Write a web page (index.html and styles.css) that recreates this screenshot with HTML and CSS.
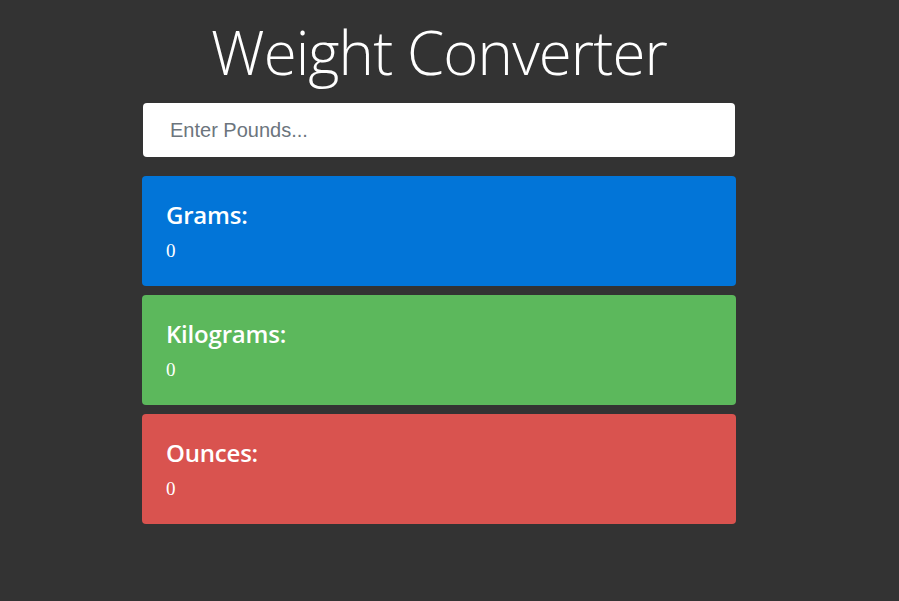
FILE: index.html
```html
<!DOCTYPE html>
<html lang="en">
<head>
    <meta charset="UTF-8">
    <meta name="viewport" content="width=device-width, initial-scale=1.0">
    <title>Weight Converter</title>
    <link rel="stylesheet" href="styles.css">
</head>
<body>

    <!-- Main converter box -->
    <div class="container">
        <h1 class="title">Weight Converter</h1>

        <form class="pounds-form">
            <input type="number" id="lbsInput" class="pounds-input" placeholder="Enter Pounds...">
        </form>

        <!-- Output cards -->
        <div id="output">
            <div class="card card-primary">
                <h4>Grams:</h4>
                <div id="gramsOutput" class="value">0</div>
            </div>
            <div class="card card-success">
                <h4>Kilograms:</h4>
                <div id="kgOutput" class="value">0</div>
            </div>
            <div class="card card-danger">
                <h4>Ounces:</h4>
                <div id="ozOutput" class="value">0</div>
            </div>
        </div>
    </div>

</body>
</html>
```

FILE: styles.css
```css
body {
    margin: 0;
    background-color: #333;
    color: #fff;
    font-family: "Liberation Serif", serif;
}

.container {
    width: 594px;
    margin-left: 142px;
    padding-top: 15px;
}

.title {
    margin: 0 0 13px;
    text-align: center;
    font-family: "Open Sans", sans-serif;
    font-weight: 300;
    font-size: 60px;
    line-height: 75px;
    letter-spacing: -0.9px;
}

.pounds-form {
    margin: 0 0 19px;
    padding: 0 1px;
}

.pounds-input {
    display: block;
    box-sizing: border-box;
    width: 100%;
    height: 54px;
    padding: 0 27px;
    border: none;
    border-radius: 4px;
    background-color: #fff;
    font-family: "Liberation Sans", Arial, sans-serif;
    font-size: 20px;
    color: #495057;
    outline: none;
}

.pounds-input::placeholder {
    color: #6c757d;
}

.card {
    box-sizing: border-box;
    height: 110px;
    margin-bottom: 9px;
    padding: 24px 24px 0;
    border-radius: 4px;
}

.card h4 {
    margin: 0 0 10px;
    font-family: "Open Sans", sans-serif;
    font-weight: 600;
    font-size: 24px;
    line-height: 30px;
    letter-spacing: -0.2px;
}

.card .value {
    font-size: 19px;
    line-height: 21px;
}

.card-primary {
    background-color: #0275d8;
}

.card-success {
    background-color: #5cb85c;
}

.card-danger {
    background-color: #d9534f;
}
```
